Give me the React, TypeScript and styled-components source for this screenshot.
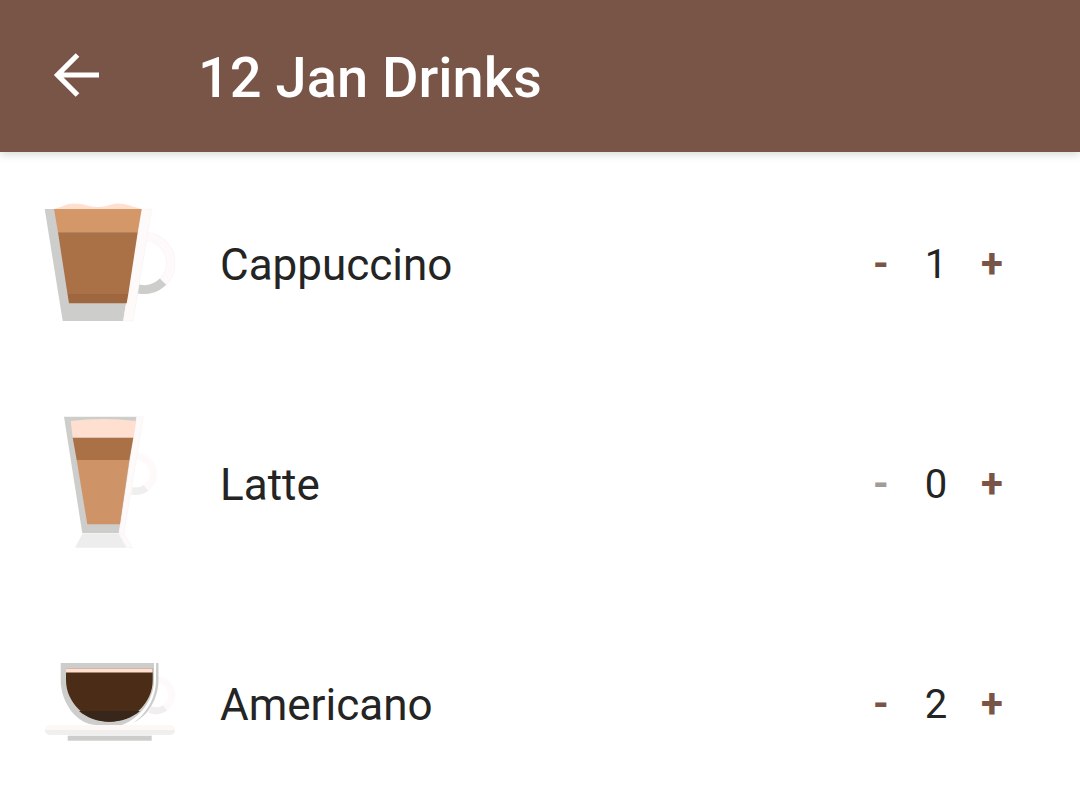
import React from 'react';
import styled, { createGlobalStyle } from 'styled-components';

const GlobalStyle = createGlobalStyle`
  html, body {
    margin: 0;
    height: 810px;
    overflow: hidden;
    background: #ffffff;
  }
`;

const Page = styled.div`
  display: flex;
  flex-direction: column;
  width: 1080px;
  height: 810px;
  overflow: hidden;
  font-family: Roboto, "Liberation Sans", sans-serif;
`;

const Toolbar = styled.header`
  position: relative;
  z-index: 1;
  display: flex;
  align-items: center;
  flex-shrink: 0;
  height: 152px;
  padding-left: 48px;
  background: #795548;
  box-shadow: 0 3px 8px rgba(0, 0, 0, 0.14);
`;

const BackButton = styled.button`
  display: flex;
  width: 60px;
  height: 60px;
  padding: 0;
  border: none;
  background: none;
  margin-right: 92px;
`;

const Title = styled.h1`
  margin: 3px 0 0 -2px;
  color: #ffffff;
  font-size: 56px;
  font-weight: 500;
`;

const List = styled.main`
  display: flex;
  flex-direction: column;
  padding-top: 2px;
`;

const Row = styled.div`
  display: flex;
  align-items: center;
  flex-shrink: 0;
  height: 220px;
  padding: 0 60px 0 44px;
`;

const DrinkIcon = styled.svg`
  flex-shrink: 0;
  width: 132px;
  height: 144px;
  margin-right: 44px;
`;

const Name = styled.span`
  flex: 1;
  margin-top: 2px;
  color: #242424;
  font-size: 44px;
`;

const Stepper = styled.div`
  display: grid;
  grid-template-columns: repeat(3, 56px);
  align-items: center;
  justify-items: center;
`;

const StepButton = styled.button<{ $off?: boolean }>`
  padding: 0;
  margin-bottom: 2px;
  border: none;
  background: none;
  font-family: inherit;
  font-size: 40px;
  font-weight: 700;
  color: ${(p) => (p.$off ? '#a19c99' : '#795548')};
`;

const Minus = styled(StepButton)`
  margin-left: 2px;
`;

const Count = styled.span`
  color: #242424;
  font-size: 40px;
`;

const GREY = '#cdcdcb';
const PALE = '#fffafa';
const EDGE = '#f8f2f1';
const FOAM = '#ffe0d0';

const Cappuccino = () => (
  <DrinkIcon viewBox="44 192 132 144">
    <circle cx="144.3" cy="263" r="26.5" fill="none" stroke={EDGE} strokeWidth="9" />
    <circle cx="144.3" cy="263" r="26.5" fill="none" stroke={PALE} strokeWidth="8" />
    <path d="M163 281.7A26.5 26.5 0 0 1 138 288.8" fill="none" stroke={GREY} strokeWidth="9" />
    <polygon points="44.7,209 141.7,209 123.3,321 62.7,321" fill={GREY} />
    <polygon points="141.7,209 151.7,209 133,321 123.3,321" fill={PALE} stroke={EDGE} strokeWidth="0.6" />
    <path d="M54 209C62 207 66 203.5 74 203.5C84 203.5 90 207 98 207C106 207 112 203.5 118 203.5C126 203.5 134 207 141.7 209Z" fill={FOAM} />
    <polygon points="54,209 141.7,209 137.7,232.3 58,232.3" fill="#d49768" />
    <polygon points="58,232.3 137.7,232.3 128.3,294 67.5,294" fill="#aa7046" />
    <polygon points="67.5,294 128.3,294 126.7,303.3 69,303.3" fill="#9f673f" />
  </DrinkIcon>
);

const Latte = () => (
  <DrinkIcon viewBox="44 412 132 144">
    <circle cx="135.7" cy="473.7" r="17.5" fill="none" stroke={PALE} strokeWidth="7.5" />
    <path d="M146 488A17.5 17.5 0 0 1 132 490.8" fill="none" stroke="#efefef" strokeWidth="7.5" />
    <polygon points="64,416.7 136.7,416.7 119,533.3 82.3,533.3" fill={GREY} />
    <polygon points="136.7,416.7 143.3,416.7 124,533.3 119,533.3" fill={PALE} stroke={EDGE} strokeWidth="0.6" />
    <polygon points="82.3,534 119,534 126.7,547.7 75,547.7" fill="#ededed" />
    <polygon points="119,534 124,534 132.7,547.7 126.7,547.7" fill={PALE} stroke={EDGE} strokeWidth="0.6" />
    <path d="M70.7 421Q103 417 136 421L133.3 437.7H72.7Z" fill={FOAM} />
    <polygon points="72.7,437.7 133.3,437.7 129.3,460 76.7,460" fill="#aa7046" />
    <polygon points="76.7,460 129.3,460 120,524.3 87.3,524.3" fill="#cf9368" />
  </DrinkIcon>
);

const Americano = () => (
  <DrinkIcon viewBox="44 632 132 144">
    <circle cx="156" cy="695" r="15.5" fill="none" stroke={PALE} strokeWidth="7" />
    <path d="M165 708A15.5 15.5 0 0 1 150 709.5" fill="none" stroke="#f0efee" strokeWidth="7" />
    <path d="M60.7 663H158.5V680C158.5 703 142 725 122 725H97C77 725 60.7 703 60.7 680Z" fill={GREY} />
    <path d="M154 663H156V680C156 700 144 717 130 725H122C140 718 154 700 154 680Z" fill="#ffffff" />
    <path d="M66 668.3H152.7V680C152.7 703 133 721.7 109.3 721.7C86 721.7 66 703 66 680Z" fill="#4a2c17" />
    <path d="M79 711H140C132 718 121 721.7 109.3 721.7C98 721.7 87 718 79 711Z" fill="#38261b" />
    <rect x="66" y="668.3" width="86.7" height="4.2" fill={FOAM} />
    <rect x="45" y="725" width="130" height="10" rx="5" fill="#fdf7f6" />
    <path d="M45 730H175A5 5 0 0 1 170 735H50A5 5 0 0 1 45 730Z" fill="#efefee" />
    <rect x="67.7" y="735.7" width="84" height="5" fill="#cdcdcb" />
  </DrinkIcon>
);

const drinks = [
  { name: 'Cappuccino', count: 1, Icon: Cappuccino },
  { name: 'Latte', count: 0, Icon: Latte },
  { name: 'Americano', count: 2, Icon: Americano },
];

export default function App() {
  return (
    <Page>
      <GlobalStyle />
      <Toolbar>
        <BackButton aria-label="Back">
          <svg viewBox="0 0 60 60" width="60" height="60">
            <path d="M10 29H51M29.5 9L9.5 29L29.5 49" fill="none" stroke="#ffffff" strokeWidth="5.2" />
          </svg>
        </BackButton>
        <Title>12 Jan Drinks</Title>
      </Toolbar>
      <List>
        {drinks.map(({ name, count, Icon }) => (
          <Row key={name}>
            <Icon />
            <Name>{name}</Name>
            <Stepper>
              <Minus $off={count === 0}>-</Minus>
              <Count>{count}</Count>
              <StepButton>+</StepButton>
            </Stepper>
          </Row>
        ))}
      </List>
    </Page>
  );
}
